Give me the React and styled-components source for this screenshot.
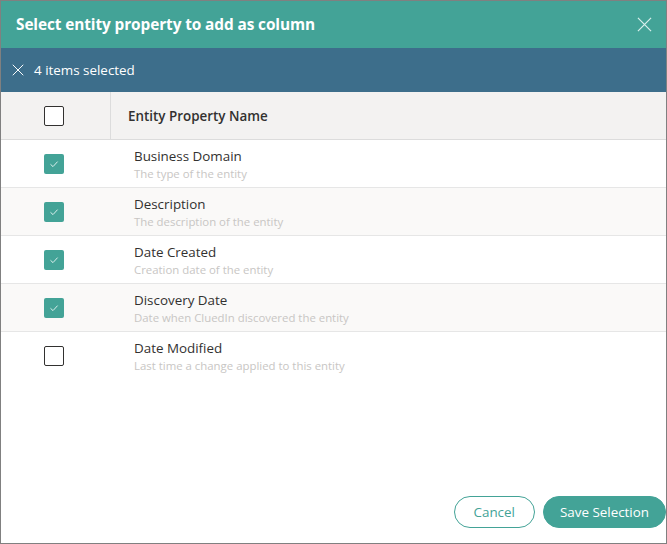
import React, { useState } from "react";
import styled, { createGlobalStyle } from "styled-components";

const GlobalStyle = createGlobalStyle`
  html, body {
    margin: 0;
    padding: 0;
    background: #ffffff;
  }
  body {
    font-family: "Open Sans", "Noto Sans", Arial, sans-serif;
    color: #323130;
  }
  * {
    box-sizing: border-box;
  }
`;

const Frame = styled.div`
  width: 667px;
  height: 544px;
  border: 1px solid #808080;
  display: flex;
  flex-direction: column;
  background: #ffffff;
  overflow: hidden;
`;

const Header = styled.div`
  height: 47px;
  flex-shrink: 0;
  background: #43a397;
  display: flex;
  align-items: center;
  justify-content: space-between;
  padding: 0 10px 0 15px;
`;

const Title = styled.h1`
  margin: 0;
  font-size: 15.4px;
  font-weight: 700;
  color: #ffffff;
  letter-spacing: -0.1px;
`;

const IconButton = styled.button`
  border: none;
  background: transparent;
  padding: 0;
  width: 24px;
  height: 24px;
  display: flex;
  align-items: center;
  justify-content: center;
  cursor: pointer;
`;

const SelectionBar = styled.div`
  height: 44px;
  flex-shrink: 0;
  background: #3d6e8b;
  display: flex;
  align-items: center;
  gap: 10px;
  padding: 0 11px;
  color: #ffffff;
  font-size: 13.4px;
`;

const HeaderRow = styled.div`
  height: 48px;
  flex-shrink: 0;
  background: #f3f2f1;
  border-bottom: 1px solid #dcdcdc;
  display: flex;
  align-items: stretch;
`;

const CheckCell = styled.div`
  width: 110px;
  flex-shrink: 0;
  display: flex;
  align-items: center;
  justify-content: center;
  padding-right: 4px;
  border-right: ${(p) => (p.$divider ? "1px solid #dcdcdc" : "none")};
`;

const HeaderLabel = styled.div`
  display: flex;
  align-items: center;
  padding-left: 17px;
  font-size: 13.4px;
  font-weight: 600;
  color: #323130;
`;

const Row = styled.div`
  height: 48px;
  flex-shrink: 0;
  display: flex;
  align-items: stretch;
  background: ${(p) => (p.$shaded ? "#faf9f8" : "#ffffff")};
  border-bottom: ${(p) => (p.$last ? "none" : "1px solid #e6e6e6")};
`;

const RowText = styled.div`
  display: flex;
  flex-direction: column;
  justify-content: center;
  padding-left: 23px;
  padding-top: 1px;
`;

const Name = styled.div`
  font-size: 13.4px;
  line-height: 19px;
  color: #323130;
`;

const Hint = styled.div`
  font-size: 11.4px;
  line-height: 16px;
  color: #c8c6c4;
`;

const Box = styled.span`
  width: 20px;
  height: 20px;
  border-radius: 2px;
  display: flex;
  align-items: center;
  justify-content: center;
  border: ${(p) => (p.$checked ? "none" : "1px solid #323130")};
  background: ${(p) => (p.$checked ? "#43a397" : "#ffffff")};
  cursor: pointer;
`;

const Spacer = styled.div`
  flex: 1;
`;

const Footer = styled.div`
  display: flex;
  justify-content: flex-end;
  gap: 8px;
  padding: 0 0 15px 0;
`;

const PillButton = styled.button`
  height: 32px;
  border-radius: 16px;
  font-family: inherit;
  font-size: 13.4px;
  padding: 0 ${(p) => (p.$primary ? "16px" : "19px")};
  border: 1px solid #43a397;
  background: ${(p) => (p.$primary ? "#43a397" : "#ffffff")};
  color: ${(p) => (p.$primary ? "#ffffff" : "#43a397")};
  cursor: pointer;
`;

const Check = () => (
  <svg width="12" height="12" viewBox="0 0 12 12">
    <path d="M2.5 6.3 L5 8.6 L9.6 3.6" fill="none" stroke="#d9efec" strokeWidth="1" />
  </svg>
);

const Cross = ({ size, color }) => (
  <svg width={size} height={size} viewBox="0 0 16 16">
    <path d="M1 1 L15 15 M15 1 L1 15" stroke={color} strokeWidth="1.3" />
  </svg>
);

const properties = [
  { name: "Business Domain", hint: "The type of the entity" },
  { name: "Description", hint: "The description of the entity" },
  { name: "Date Created", hint: "Creation date of the entity" },
  { name: "Discovery Date", hint: "Date when CluedIn discovered the entity" },
  { name: "Date Modified", hint: "Last time a change applied to this entity" },
];

const App = () => {
  const [selected, setSelected] = useState([true, true, true, true, false]);
  const count = selected.filter(Boolean).length;

  const toggle = (i) =>
    setSelected(selected.map((v, j) => (j === i ? !v : v)));

  return (
    <>
      <GlobalStyle />
      <Frame>
        <Header>
          <Title>Select entity property to add as column</Title>
          <IconButton aria-label="Close">
            <Cross size={15} color="#d8efec" />
          </IconButton>
        </Header>
        <SelectionBar>
          <Cross size={12} color="#ffffff" />
          <span>{count} items selected</span>
        </SelectionBar>
        <HeaderRow>
          <CheckCell $divider>
            <Box />
          </CheckCell>
          <HeaderLabel>Entity Property Name</HeaderLabel>
        </HeaderRow>
        {properties.map((p, i) => (
          <Row
            key={p.name}
            $shaded={i % 2 === 1}
            $last={i === properties.length - 1}
          >
            <CheckCell>
              <Box $checked={selected[i]} onClick={() => toggle(i)}>
                {selected[i] && <Check />}
              </Box>
            </CheckCell>
            <RowText>
              <Name>{p.name}</Name>
              <Hint>{p.hint}</Hint>
            </RowText>
          </Row>
        ))}
        <Spacer />
        <Footer>
          <PillButton>Cancel</PillButton>
          <PillButton $primary>Save Selection</PillButton>
        </Footer>
      </Frame>
    </>
  );
};

export default App;
